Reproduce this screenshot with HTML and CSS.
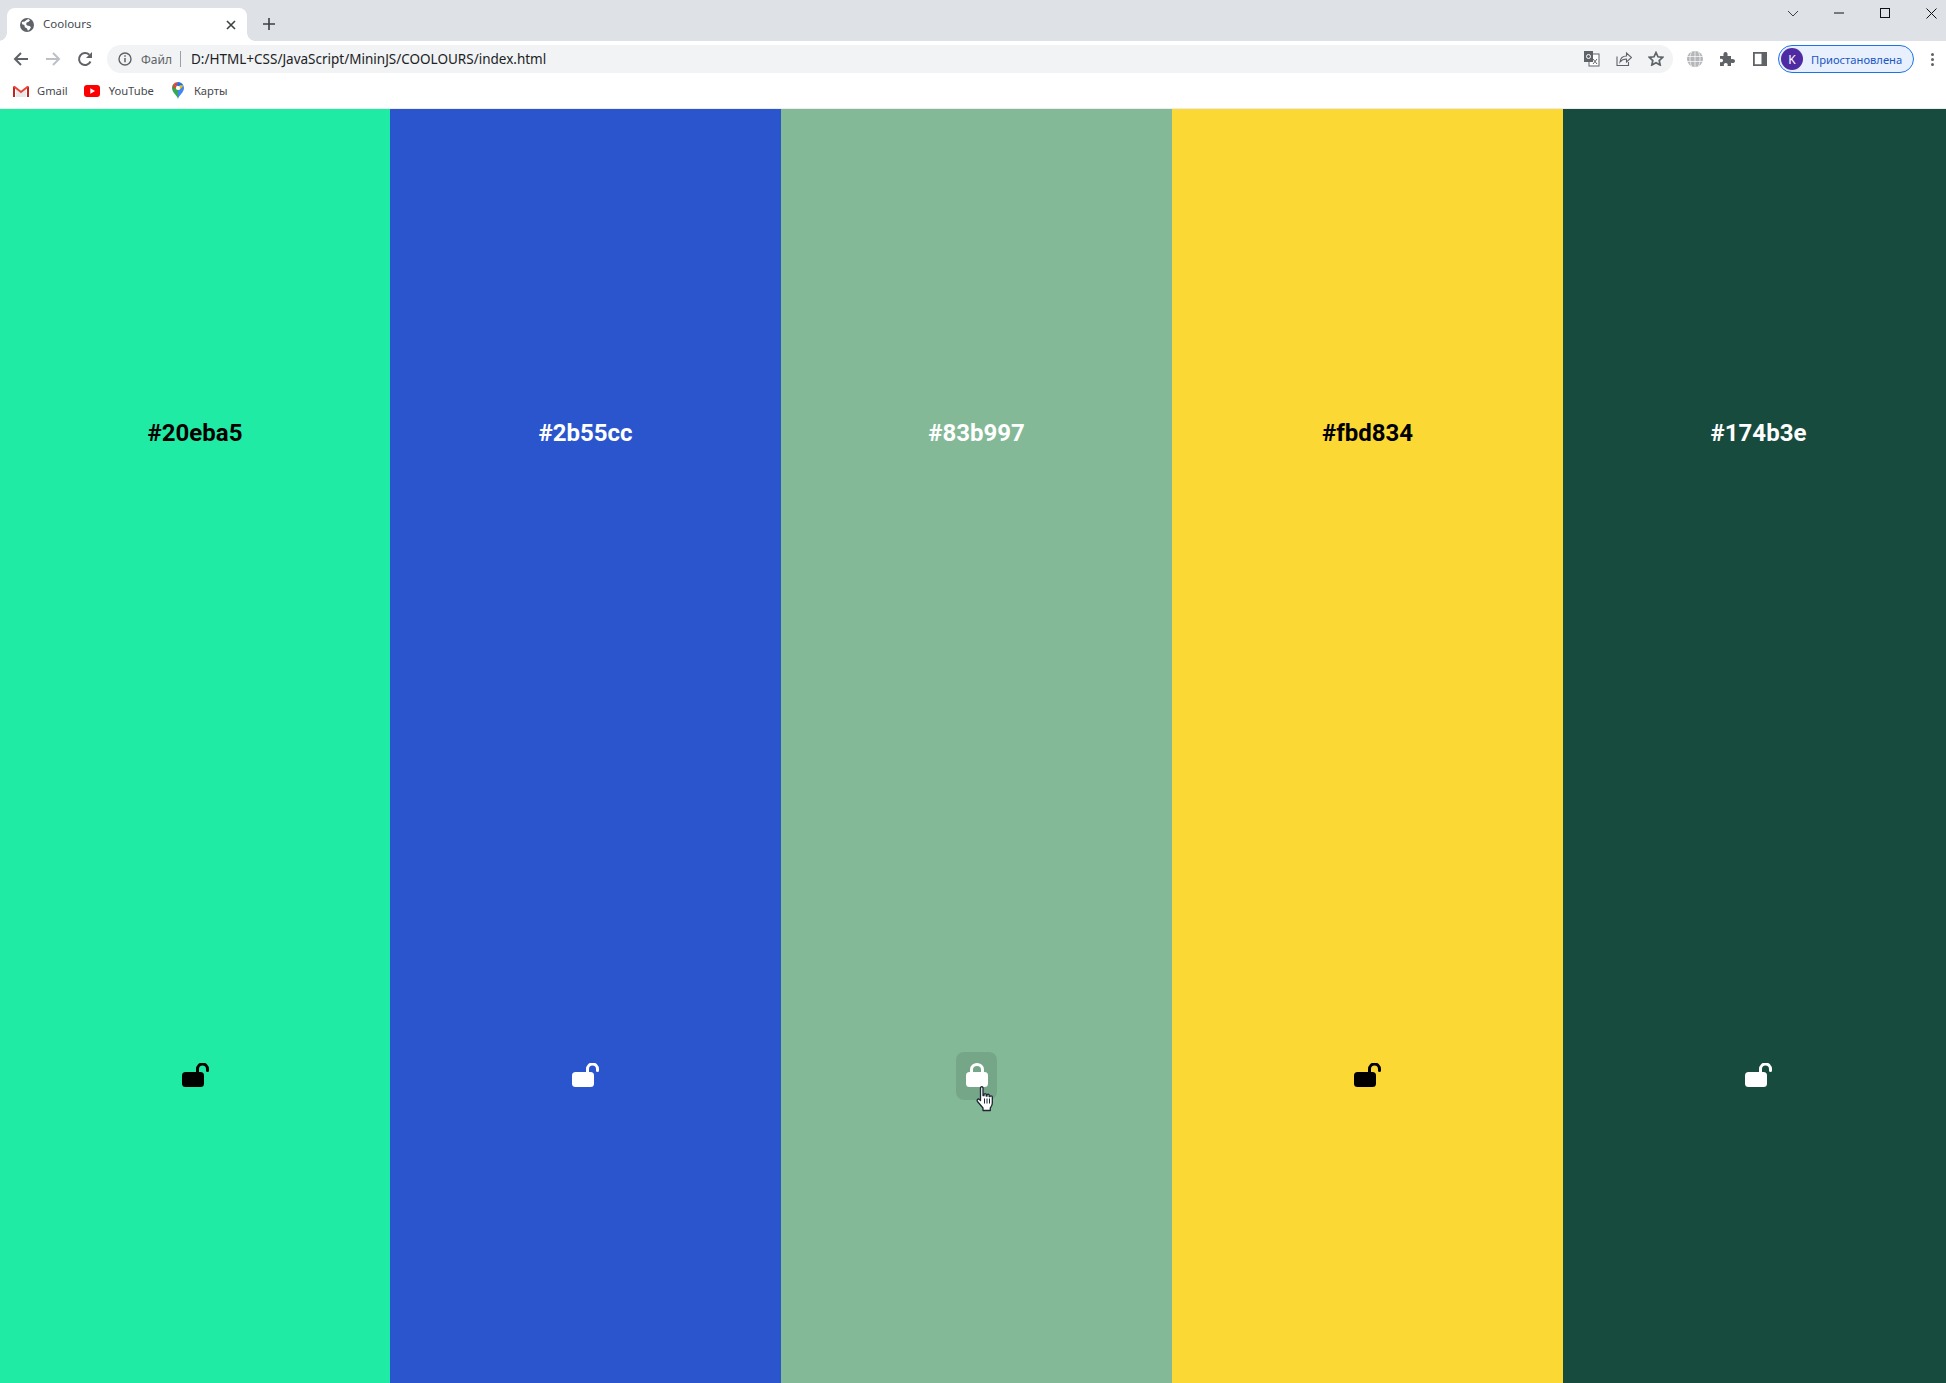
FILE: index.html
```html
<!DOCTYPE html>
<html lang="en">
<head>
    <meta charset="UTF-8">
    <title>Coolours</title>
    <link rel="stylesheet" href="styles.css">
</head>
<body>
<header class="browser">
    <!--tabs-->
    <div class="tabstrip">
        <div class="tab">
            <svg class="tab-globe" width="14" height="14" viewBox="0 0 16 16"><circle cx="8" cy="8" r="8" fill="#5f6368"/><path d="M2 4.500l3.500-.5L7 2.500 9.500 1l2 1.500-2 2-2 .5-.5 2 1 1.500 3 .5 1.500 1.500-1.500 2.500-2 1.500-1-2.500-2.500-1.500-.5-2.500-2.500-1z" fill="#fff"/></svg>
            <span class="tab-title">Coolours</span>
            <svg class="tab-close" width="10" height="10" viewBox="0 0 10 10"><path d="M1 1l8 8M9 1l-8 8" stroke="#3c4043" stroke-width="1.600"/></svg>
        </div>
        <svg class="tab-new" width="12" height="12" viewBox="0 0 12 12"><path d="M6 0v12M0 6h12" stroke="#3c4043" stroke-width="1.600"/></svg>
        <div class="window-controls">
            <svg width="12" height="7" viewBox="0 0 12 7"><path d="M1 1l5 5 5-5" fill="none" stroke="#3c4043" stroke-width="1"/></svg>
            <svg width="10" height="2" viewBox="0 0 10 2"><path d="M0 1h10" stroke="#111" stroke-width="1"/></svg>
            <svg width="10" height="10" viewBox="0 0 10 10"><rect x=".5" y=".5" width="9" height="9" fill="none" stroke="#111"/></svg>
            <svg width="11" height="11" viewBox="0 0 11 11"><path d="M.5.500l10 10M10.500.500l-10 10" stroke="#111" stroke-width="1"/></svg>
        </div>
    </div>

    <!--address bar-->
    <div class="toolbar">
        <div class="tool"><svg width="16" height="16" viewBox="0 0 16 16"><path d="M15 8H2M8 2L2 8l6 6" fill="none" stroke="#5f6368" stroke-width="2"/></svg></div>
        <div class="tool"><svg width="16" height="16" viewBox="0 0 16 16"><path d="M1 8h13M8 2l6 6-6 6" fill="none" stroke="#bdc1c6" stroke-width="2"/></svg></div>
        <div class="tool"><svg width="16" height="16" viewBox="0 0 16 16"><path d="M13.500 10.500A6 6 0 1 1 12.300 3.800" fill="none" stroke="#5f6368" stroke-width="2"/><path d="M15 1v6H9z" fill="#5f6368"/></svg></div>
        <div class="omnibox">
            <svg width="14" height="14" viewBox="0 0 14 14"><circle cx="7" cy="7" r="6" fill="none" stroke="#5f6368" stroke-width="1.400"/><path d="M7 6v4.200M7 3.300v1.500" stroke="#5f6368" stroke-width="1.500"/></svg>
            <span class="scheme">Файл</span>
            <span class="omni-sep"></span>
            <span class="url">D:/HTML+CSS/JavaScript/MininJS/COOLOURS/index.html</span>
            <div class="omni-actions">
                <svg width="16" height="16" viewBox="0 0 16 16"><rect x="5" y="3" width="10" height="12" fill="#fff" stroke="#5f6368"/><rect x="0" y="0" width="9" height="11" fill="#5f6368"/><circle cx="4.500" cy="5.500" r="2" fill="none" stroke="#fff"/><path d="M9 8l4 5M13 8l-4 5" stroke="#5f6368"/></svg>
                <svg width="16" height="15" viewBox="0 0 16 15"><path d="M1 5.500V14.500H12.500V11" fill="none" stroke="#5f6368" stroke-width="1.100"/><path d="M4 11C4.500 7 7.500 5 10.500 5V2L15.500 6.500 10.500 11V8C8 8 5.500 9 4 11z" fill="none" stroke="#5f6368" stroke-width="1.100"/></svg>
                <svg width="16" height="15" viewBox="0 0 16 15"><path d="M8 1.500l2 4.300 4.700.500-3.500 3.200 1 4.600L8 11.800l-4.200 2.300 1-4.600L1.300 6.300 6 5.800z" fill="none" stroke="#5f6368" stroke-width="1.700"/></svg>
            </div>
        </div>
        <div class="tool ext-first"><svg width="16" height="16" viewBox="0 0 16 16"><circle cx="8" cy="8" r="8" fill="#b4b6b9"/><path d="M0 5.500h16M0 10.500h16M8 0v16M4.500 1c-2 4-2 10 0 14M11.500 1c2 4 2 10 0 14" fill="none" stroke="#fff" stroke-width=".7"/></svg></div>
        <div class="tool"><svg width="16" height="16" viewBox="0 0 16 16"><path d="M1 5h3.500C4 2.500 5 1 6.500 1S9 2.500 8.500 5H12v3.200c2-.7 4 0 4 1.800s-2 2.500-4 1.800V15H8.500c.7-2-.2-3-1.700-3s-2.500 1-1.800 3H1v-4c2 .7 3-.3 3-1.500S3 7.300 1 8z" fill="#5f6368"/></svg></div>
        <div class="tool tool-panel"><svg width="14" height="14" viewBox="0 0 14 14"><path d="M0 0h14v14H0zM1.800 1.800v10.400h6.700V1.800z" fill="#5f6368" fill-rule="evenodd"/></svg></div>
        <div class="profile">
            <span class="avatar">K</span>
            <span class="profile-text">Приостановлена</span>
        </div>
        <div class="menu-dots"><i></i><i></i><i></i></div>
    </div>

    <!--bookmarks-->
    <div class="bookmarks">
        <div class="bookmark">
            <svg width="16" height="12" viewBox="0 0 16 12"><path d="M3 4.500V12h10V4.500L8 8.300z" fill="#e8e8e8"/><path d="M1 12V1.500" stroke="#c5221f" stroke-width="2"/><path d="M15 12V1.500" stroke="#c5221f" stroke-width="2"/><path d="M1 1.500l7 5.500 7-5.500" fill="none" stroke="#ea4335" stroke-width="2"/></svg>
            <span>Gmail</span>
        </div>
        <div class="bookmark bookmark-yt">
            <svg width="16" height="12" viewBox="0 0 16 12"><rect width="16" height="12" rx="3" fill="#f00"/><path d="M6.300 3.300v5.400L11 6z" fill="#fff"/></svg>
            <span>YouTube</span>
        </div>
        <div class="bookmark bookmark-maps">
            <svg width="12" height="17" viewBox="0 0 12 17"><path d="M6 17C5 13 0 10.500 0 6c0-1.500.5-2.800 1.500-3.900L6 6v10z" fill="#34a853"/><path d="M6 17c1-4 6-6.500 6-11 0-1-.2-1.800-.6-2.600L6 8z" fill="#4285f4"/><path d="M1.500 2.100C2.600.8 4.200 0 6 0l-1.500 5z" fill="#ea4335"/><path d="M6 0c2.400 0 4.400 1.400 5.400 3.400L7 5.500 4.500 3z" fill="#1a73e8"/><path d="M1.500 2.100L4.500 5 1 7z" fill="#ea4335"/><path d="M3.800 6.800L8 3.300l3.400.1L7.500 8z" fill="#fbbc04"/><circle cx="6" cy="6" r="2.100" fill="#fff"/></svg>
            <span>Карты</span>
        </div>
    </div>
</header>

<main class="palette">
    <div class="col col-dark-text" style="background:#20eba5">
        <h2>#20eba5</h2>
        <button class="lock"><svg width="27" height="24" viewBox="0 0 27 24"><rect y="9" width="22" height="15" rx="3.500"/><path d="M15.500 10V6a5 5 0 0 1 10 0v1.500" fill="none" stroke="currentColor" stroke-width="3" stroke-linecap="round"/></svg></button>
    </div>
    <div class="col" style="background:#2b55cc">
        <h2>#2b55cc</h2>
        <button class="lock"><svg width="27" height="24" viewBox="0 0 27 24"><rect y="9" width="22" height="15" rx="3.500"/><path d="M15.500 10V6a5 5 0 0 1 10 0v1.500" fill="none" stroke="currentColor" stroke-width="3" stroke-linecap="round"/></svg></button>
    </div>
    <div class="col" style="background:#83b997">
        <h2>#83b997</h2>
        <button class="lock lock-hover">
            <svg width="22" height="24" viewBox="0 0 22 24"><rect y="9" width="22" height="15" rx="3.500"/><path d="M5.500 10V6.500a5.500 5 0 0 1 11 0V10" fill="none" stroke="currentColor" stroke-width="3"/></svg>
            <svg class="hand" width="20" height="26" viewBox="0 0 20 26"><path d="M5.500 2c0-1.700 2.500-1.700 2.500 0v7.500l1 .1V8.500c0-1.300 2.200-1.300 2.200 0v1.500l.8.100V9.200c0-1.300 2.200-1.300 2.200 0v1.300l.8.200c0-1.200 2.300-1.200 2.300.3v6c0 3-1.500 4-2 5v2.500H8v-2.500L2.500 15.500c-1.200-1.500.5-3.300 2-2l1 1z" fill="#fff" stroke="#1c2733" stroke-width="1.300" stroke-linejoin="round"/><path d="M9.500 12.500v5M12 12.500v5M14.500 12.500v5" stroke="#1c2733" stroke-width="1"/></svg>
        </button>
    </div>
    <div class="col col-dark-text" style="background:#fbd834">
        <h2>#fbd834</h2>
        <button class="lock"><svg width="27" height="24" viewBox="0 0 27 24"><rect y="9" width="22" height="15" rx="3.500"/><path d="M15.500 10V6a5 5 0 0 1 10 0v1.500" fill="none" stroke="currentColor" stroke-width="3" stroke-linecap="round"/></svg></button>
    </div>
    <div class="col" style="background:#174b3e">
        <h2>#174b3e</h2>
        <button class="lock"><svg width="27" height="24" viewBox="0 0 27 24"><rect y="9" width="22" height="15" rx="3.500"/><path d="M15.500 10V6a5 5 0 0 1 10 0v1.500" fill="none" stroke="currentColor" stroke-width="3" stroke-linecap="round"/></svg></button>
    </div>
</main>
</body>
</html>
```

FILE: styles.css
```css
* {
    padding: 0;
    margin: 0;
    box-sizing: border-box;
}

html, body {
    height: 100%;
    overflow: hidden;
}

body {
    font-family: "Noto Sans", "Open Sans", sans-serif;
    background: #fff;
}

svg {
    display: block;
    flex: none;
}

/* browser */
.browser {
    height: 109px;
    color: #3c4043;
}

.tabstrip {
    height: 41px;
    padding: 8px 0 0 7px;
    background: #dee1e6;
    display: flex;
    align-items: flex-start;
}

.tab {
    width: 240px;
    height: 33px;
    padding: 0 11px 0 13px;
    background: #fff;
    border-radius: 8px 8px 0 0;
    display: flex;
    align-items: center;
    position: relative;
}

.tab::before,
.tab::after {
    content: "";
    position: absolute;
    bottom: 0;
    width: 8px;
    height: 8px;
    background: radial-gradient(circle at 0 0, #dee1e6 7.500px, #fff 8px);
}

.tab::before {
    left: -8px;
}

.tab::after {
    right: -8px;
    background: radial-gradient(circle at 100% 0, #dee1e6 7.500px, #fff 8px);
}

.tab-title {
    margin-left: 9px;
    padding-bottom: 2px;
    font-size: 11.500px;
    color: #45494d;
    flex: 1;
}

.tab-new {
    margin: 10px 0 0 16px;
}

.window-controls {
    margin: -2px -8px 0 auto;
    width: 184px;
    height: 14px;
    display: grid;
    grid-template-columns: repeat(4, 46px);
    align-items: center;
    justify-items: center;
}

.toolbar {
    height: 36px;
    padding: 4px 0 4px 5px;
    display: flex;
    align-items: center;
}

.tool {
    width: 32px;
    height: 28px;
    display: flex;
    align-items: center;
    justify-content: center;
}

.tool-panel {
    padding-left: 2px;
}

.omnibox {
    width: 1566px;
    height: 28px;
    margin-left: 6px;
    padding-left: 11px;
    border-radius: 14px;
    background: #f1f3f4;
    display: flex;
    align-items: center;
    font-size: 12px;
}

.scheme {
    margin-left: 9px;
    color: #5f6368;
}

.omni-sep {
    width: 1px;
    height: 16px;
    margin: 0 10px 0 8px;
    background: #9aa0a6;
}

.url {
    font-size: 13.500px;
    color: #202124;
}

.omni-actions {
    margin-left: auto;
    padding-right: 9px;
    display: flex;
    gap: 16px;
}

.ext-first {
    margin-left: 6px;
}

.profile {
    width: 136px;
    height: 28px;
    margin-left: 3px;
    padding-left: 2px;
    border: 1px solid #1a73e8;
    border-radius: 14px;
    background: #e8f0fe;
    display: flex;
    align-items: center;
    font-size: 11.200px;
    color: #1a56c4;
}

.avatar {
    width: 22px;
    height: 22px;
    border-radius: 50%;
    background: #4f2ba3;
    color: #fff;
    font-size: 12px;
    display: flex;
    align-items: center;
    justify-content: center;
}

.profile-text {
    margin-left: 8px;
}

.menu-dots {
    margin-left: 17px;
    display: flex;
    flex-direction: column;
    gap: 2px;
}

.menu-dots i {
    width: 3px;
    height: 3px;
    border-radius: 50%;
    background: #5f6368;
}

.bookmarks {
    height: 32px;
    padding: 0 0 4px 13px;
    border-bottom: 1px solid #ececee;
    display: flex;
    align-items: center;
    gap: 17px;
    font-size: 11.200px;
    color: #45494d;
}

.bookmark {
    display: flex;
    align-items: center;
    gap: 8px;
}

.bookmark-yt {
    margin-left: -1px;
    gap: 9px;
}

.bookmark-maps {
    margin-left: 1px;
    gap: 10px;
}

/* colours */
.palette {
    width: 1954px;
    height: 1274px;
    display: grid;
    grid-template-columns: 390px repeat(4, 391px);
}

.col {
    height: 1298px;
    padding: 7px 0 5px;
    display: flex;
    flex-direction: column;
    align-items: center;
    justify-content: space-around;
    color: #fff;
}

.col-dark-text {
    color: #000;
}

h2 {
    font-family: Roboto, sans-serif;
    font-size: 24px;
    font-weight: 700;
    line-height: 30px;
}

.lock {
    width: 41px;
    height: 48px;
    padding-bottom: 2px;
    border: 0;
    border-radius: 8px;
    background: transparent;
    color: inherit;
    display: flex;
    align-items: center;
    justify-content: center;
    position: relative;
}

.lock svg {
    fill: currentColor;
}

.lock-hover {
    background: rgba(0, 0, 0, 0.1);
}

.lock .hand {
    position: absolute;
    left: 19px;
    top: 34px;
}
```
